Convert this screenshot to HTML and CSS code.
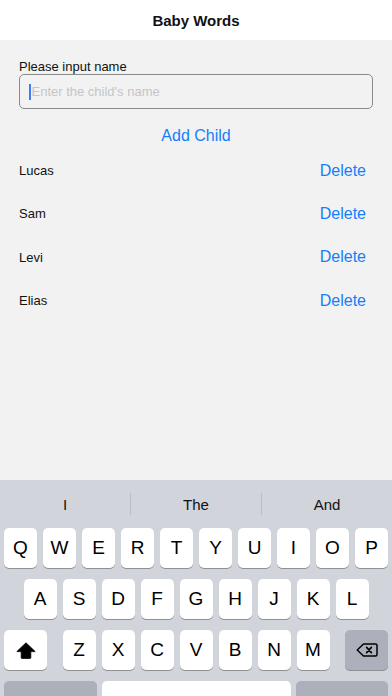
FILE: index.html
```html
<!DOCTYPE html>
<html>
<head>
<meta charset="utf-8">
<link rel="stylesheet" href="styles.css">
</head>
<body>
<div class="app">
  <header class="nav"><span class="nav-title">Baby Words</span></header>
  <main class="content">
    <div class="label">Please input name</div>
    <div class="field"><span class="caret"></span><span class="placeholder">Enter the child's name</span></div>
    <div class="add">Add Child</div>
    <ul class="list">
      <li class="row"><span class="name">Lucas</span><span class="del">Delete</span></li>
      <li class="row"><span class="name">Sam</span><span class="del">Delete</span></li>
      <li class="row"><span class="name">Levi</span><span class="del">Delete</span></li>
      <li class="row"><span class="name">Elias</span><span class="del">Delete</span></li>
    </ul>
  </main>
  <section class="keyboard">
    <div class="suggest">
      <div class="sug">I</div><div class="sep"></div><div class="sug">The</div><div class="sep"></div><div class="sug">And</div>
    </div>
    <div class="keys">
      <div class="krow">
        <div class="key">Q</div><div class="key">W</div><div class="key">E</div><div class="key">R</div><div class="key">T</div><div class="key">Y</div><div class="key">U</div><div class="key">I</div><div class="key">O</div><div class="key">P</div>
      </div>
      <div class="krow r2">
        <div class="key">A</div><div class="key">S</div><div class="key">D</div><div class="key">F</div><div class="key">G</div><div class="key">H</div><div class="key">J</div><div class="key">K</div><div class="key">L</div>
      </div>
      <div class="krow r3">
        <div class="key wide shift"><svg width="20" height="17" viewBox="0 0 20 17"><path d="M10 0.8 L19.2 9.6 L14.8 9.6 L14.8 15.6 Q14.8 16.6 13.8 16.6 L6.2 16.6 Q5.2 16.6 5.2 15.6 L5.2 9.6 L0.8 9.6 Z" fill="#000" stroke="#000" stroke-width="0.8" stroke-linejoin="round"/></svg></div>
        <div class="group">
          <div class="key">Z</div><div class="key">X</div><div class="key">C</div><div class="key">V</div><div class="key">B</div><div class="key">N</div><div class="key">M</div>
        </div>
        <div class="key wide dark"><svg width="22" height="14" viewBox="0 0 22 14"><path d="M7.5 1 H19.5 Q21 1 21 2.5 V11.5 Q21 13 19.5 13 H7.5 L1.2 7 Z" fill="none" stroke="#000" stroke-width="1.5" stroke-linejoin="round"/><path d="M10.6 4.4 L15.4 9.6 M15.4 4.4 L10.6 9.6" stroke="#000" stroke-width="1.6" stroke-linecap="round"/></svg></div>
      </div>
      <div class="krow r4">
        <div class="key dark b-left"></div>
        <div class="key space"></div>
        <div class="key dark b-right"></div>
      </div>
    </div>
  </section>
</div>
</body>
</html>
```
FILE: styles.css
```css
* { box-sizing: border-box; }
html, body { margin: 0; padding: 0; }
body {
  width: 392px;
  height: 696px;
  overflow: hidden;
  font-family: "Liberation Sans", Arial, sans-serif;
  color: #111;
  background: #f2f2f2;
}
.app { display: flex; flex-direction: column; height: 696px; }
.nav {
  height: 40px;
  flex: 0 0 40px;
  background: #fff;
  display: flex;
  align-items: center;
  justify-content: center;
}
.nav-title { font-size: 15px; font-weight: bold; color: #111; margin-top: 1px; }
.content {
  flex: 1;
  background: #f2f2f2;
  padding: 20px 26px 0 19px;
}
.label { font-size: 13px; line-height: 14px; color: #111; }
.field {
  height: 35px;
  margin-right: -7px;
  border: 1px solid #8a8a8a;
  border-radius: 5px;
  display: flex;
  align-items: center;
  padding-left: 9px;
}
.caret { width: 1.5px; height: 16px; background: #3d7cf2; margin-right: 1px; }
.placeholder { font-size: 13px; color: #c5c5c9; }
.add {
  margin: 17px 0 0 7px;
  text-align: center;
  font-size: 16px;
  line-height: 20px;
  color: #147efb;
}
.list { list-style: none; margin: 3px 0 0; padding: 0; }
.row {
  height: 43.3px;
  display: flex;
  align-items: center;
  justify-content: space-between;
}
.name { font-size: 13px; color: #111; }
.del { font-size: 16px; color: #147efb; }
.keyboard {
  flex: 0 0 216px;
  height: 216px;
  background: #d1d4da;
  overflow: hidden;
}
.suggest { height: 48px; display: flex; align-items: center; }
.sug { flex: 1; text-align: center; font-size: 15px; color: #111; }
.sep { width: 1px; height: 22px; background: #b9bcc2; }
.keys { display: flex; flex-direction: column; gap: 11px; padding: 0 4px; }
.krow { display: flex; gap: 6px; height: 40px; }
.r2 { justify-content: center; }
.r3 { justify-content: space-between; }
.group { display: flex; gap: 6px; }
.key {
  width: 33px;
  height: 40px;
  background: #fff;
  border-radius: 5px;
  box-shadow: 0 1px 0 rgba(0,0,0,0.32);
  display: flex;
  align-items: center;
  justify-content: center;
  font-size: 19px;
  color: #000;
}
.wide { width: 43px; }
.dark { background: #abb0ba; }
.r4 { gap: 5px; }
.b-left { width: 93px; }
.space { flex: 1; }
.b-right { width: 92px; }
```
